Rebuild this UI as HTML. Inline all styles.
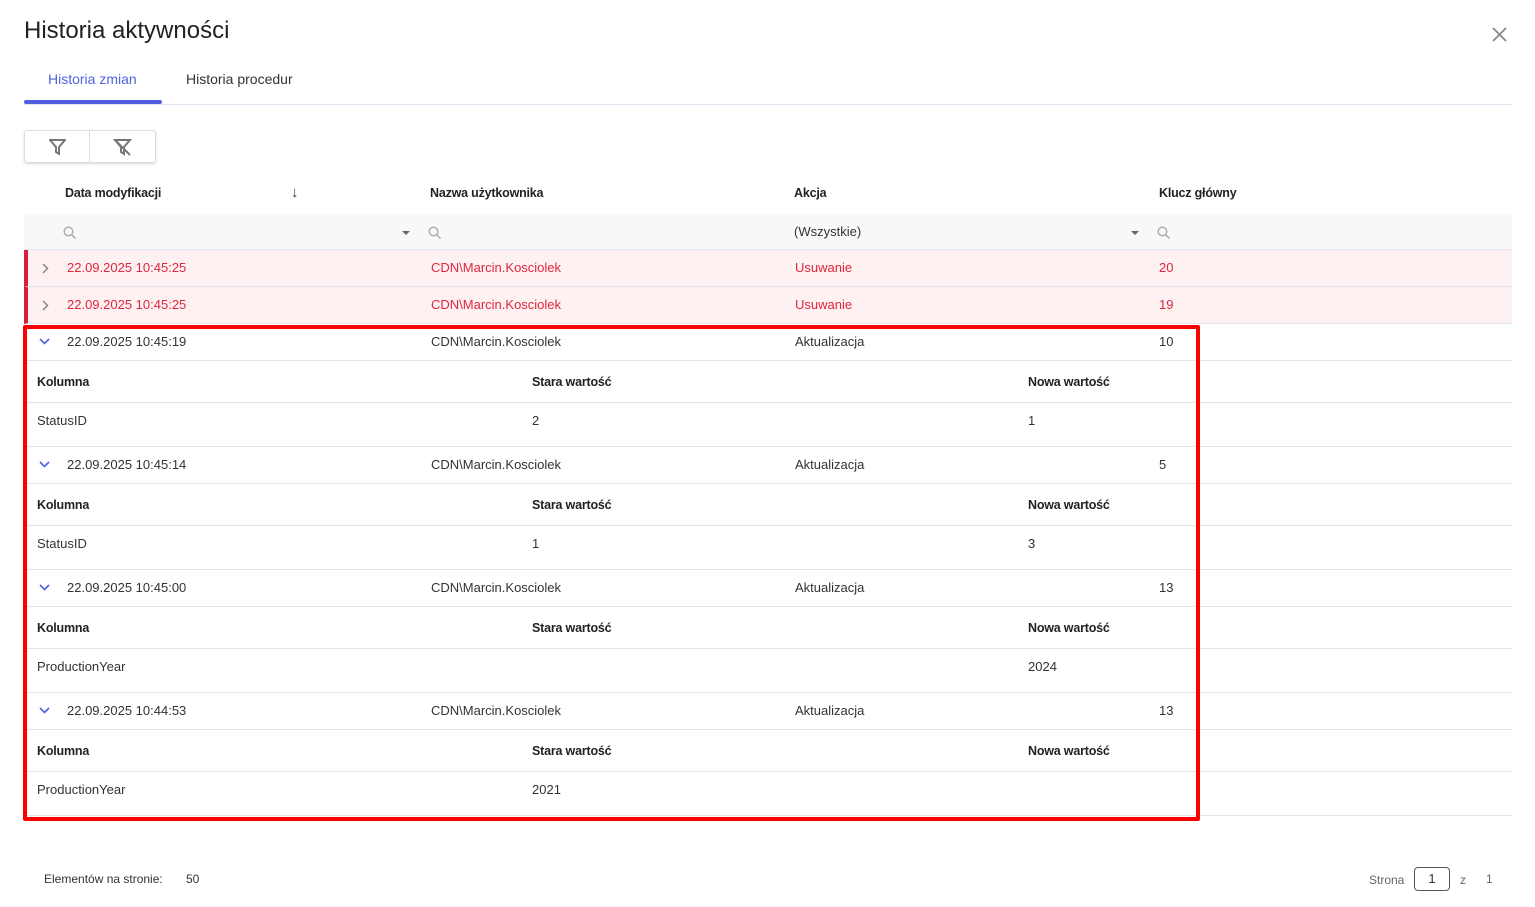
<!DOCTYPE html>
<html><head><meta charset="utf-8"><style>
*{margin:0;padding:0;box-sizing:border-box}
body{width:1535px;height:907px;background:#fff;font-family:"Liberation Sans",sans-serif;color:#333;position:relative;overflow:hidden;font-size:13px}
.a{position:absolute;white-space:nowrap}
.b{font-weight:bold;color:#222;font-size:12.5px;letter-spacing:-0.2px}
.row{position:absolute;left:24px;width:1488px;border-bottom:1px solid #e3e3f0}
.red{color:#e0263d}
</style></head><body>
<div class="a" style="left:24px;top:17px;font-size:24px;color:#222">Historia aktywności</div>
<svg class="a" style="left:1492px;top:27px" width="15" height="15"><path d="M1 1l13 13M14 1L1 14" stroke="#888" stroke-width="1.8"/></svg>
<div class="a" style="left:48px;top:71px;font-size:14px;color:#4f63e0">Historia zmian</div>
<div class="a" style="left:186px;top:71px;font-size:14px;color:#333">Historia procedur</div>
<div class="a" style="left:24px;top:104px;width:1488px;height:1px;background:#e4e6f3"></div>
<div class="a" style="left:24px;top:100px;width:138px;height:4px;background:#4f5fe0;border-radius:2px"></div>
<div class="a" style="left:24px;top:130px;width:132px;height:33px;border:1px solid #ddd;border-radius:3px;box-shadow:0 1px 2px rgba(0,0,0,.15)"></div>
<div class="a" style="left:89px;top:131px;width:1px;height:31px;background:#ddd"></div>
<svg class="a" style="left:49px;top:139px" width="17" height="16" viewBox="0 0 17 16"><path d="M1 1h15l-6 7v7l-3-2V8z" fill="none" stroke="#777" stroke-width="2"/></svg>
<svg class="a" style="left:113px;top:139px" width="19" height="17" viewBox="0 0 19 17"><path d="M2 1h15l-6 7v7l-3-2V8z" fill="none" stroke="#777" stroke-width="2"/><path d="M2 1l15 15" stroke="#777" stroke-width="2"/></svg>
<div class="a b" style="left:65px;top:186px">Data modyfikacji</div>
<div class="a" style="left:291px;top:184px;font-size:15px">↓</div>
<div class="a b" style="left:430px;top:186px">Nazwa użytkownika</div>
<div class="a b" style="left:794px;top:186px">Akcja</div>
<div class="a b" style="left:1159px;top:186px">Klucz główny</div>
<div class="row" style="top:214px;height:36px;background:#f7f8fa"></div>
<svg class="a" style="left:63px;top:226px" width="14" height="14"><circle cx="5.5" cy="5.5" r="4.3" fill="none" stroke="#aaa" stroke-width="1.4"/><path d="M8.5 8.5l4 4" stroke="#aaa" stroke-width="1.5"/></svg>
<svg class="a" style="left:428px;top:226px" width="14" height="14"><circle cx="5.5" cy="5.5" r="4.3" fill="none" stroke="#aaa" stroke-width="1.4"/><path d="M8.5 8.5l4 4" stroke="#aaa" stroke-width="1.5"/></svg>
<svg class="a" style="left:1157px;top:226px" width="14" height="14"><circle cx="5.5" cy="5.5" r="4.3" fill="none" stroke="#aaa" stroke-width="1.4"/><path d="M8.5 8.5l4 4" stroke="#aaa" stroke-width="1.5"/></svg>
<div class="a" style="left:402px;top:231px;border:4px solid transparent;border-top:4px solid #666"></div>
<div class="a" style="left:1131px;top:231px;border:4px solid transparent;border-top:4px solid #666"></div>
<div class="a" style="left:794px;top:224px">(Wszystkie)</div>

<div class="row" style="top:250px;height:37px;background:#fdf1f2;border-left:4px solid #d91e3d"></div>
<div class="row" style="top:287px;height:37px;background:#fdf1f2;border-left:4px solid #d91e3d"></div>
<svg class="a" style="left:42px;top:263px" width="7" height="11"><path d="M1 1l4.5 4.5L1 10" fill="none" stroke="#888" stroke-width="1.5"/></svg>
<svg class="a" style="left:42px;top:300px" width="7" height="11"><path d="M1 1l4.5 4.5L1 10" fill="none" stroke="#888" stroke-width="1.5"/></svg>
<div class="a red" style="left:67px;top:260px">22.09.2025 10:45:25</div>
<div class="a red" style="left:431px;top:260px">CDN\Marcin.Kosciolek</div>
<div class="a red" style="left:795px;top:260px">Usuwanie</div>
<div class="a red" style="left:1159px;top:260px">20</div>
<div class="a red" style="left:67px;top:297px">22.09.2025 10:45:25</div>
<div class="a red" style="left:431px;top:297px">CDN\Marcin.Kosciolek</div>
<div class="a red" style="left:795px;top:297px">Usuwanie</div>
<div class="a red" style="left:1159px;top:297px">19</div>

<div class="row" style="top:324px;height:37px"></div><div class="row" style="top:361px;height:42px"></div><div class="row" style="top:403px;height:44px"></div>
<div class="row" style="top:447px;height:37px"></div><div class="row" style="top:484px;height:42px"></div><div class="row" style="top:526px;height:44px"></div>
<div class="row" style="top:570px;height:37px"></div><div class="row" style="top:607px;height:42px"></div><div class="row" style="top:649px;height:44px"></div>
<div class="row" style="top:693px;height:37px"></div><div class="row" style="top:730px;height:42px"></div><div class="row" style="top:772px;height:44px"></div>

<svg class="a" style="left:39px;top:338px" width="11" height="7"><path d="M1 1l4.5 4.5L10 1" fill="none" stroke="#4f5fe0" stroke-width="1.6"/></svg>
<div class="a" style="left:67px;top:334px">22.09.2025 10:45:19</div><div class="a" style="left:431px;top:334px">CDN\Marcin.Kosciolek</div><div class="a" style="left:795px;top:334px">Aktualizacja</div><div class="a" style="left:1159px;top:334px">10</div>
<div class="a b" style="left:37px;top:375px">Kolumna</div><div class="a b" style="left:532px;top:375px">Stara wartość</div><div class="a b" style="left:1028px;top:375px">Nowa wartość</div>
<div class="a" style="left:37px;top:413px">StatusID</div><div class="a" style="left:532px;top:413px">2</div><div class="a" style="left:1028px;top:413px">1</div>

<svg class="a" style="left:39px;top:461px" width="11" height="7"><path d="M1 1l4.5 4.5L10 1" fill="none" stroke="#4f5fe0" stroke-width="1.6"/></svg>
<div class="a" style="left:67px;top:457px">22.09.2025 10:45:14</div><div class="a" style="left:431px;top:457px">CDN\Marcin.Kosciolek</div><div class="a" style="left:795px;top:457px">Aktualizacja</div><div class="a" style="left:1159px;top:457px">5</div>
<div class="a b" style="left:37px;top:498px">Kolumna</div><div class="a b" style="left:532px;top:498px">Stara wartość</div><div class="a b" style="left:1028px;top:498px">Nowa wartość</div>
<div class="a" style="left:37px;top:536px">StatusID</div><div class="a" style="left:532px;top:536px">1</div><div class="a" style="left:1028px;top:536px">3</div>

<svg class="a" style="left:39px;top:584px" width="11" height="7"><path d="M1 1l4.5 4.5L10 1" fill="none" stroke="#4f5fe0" stroke-width="1.6"/></svg>
<div class="a" style="left:67px;top:580px">22.09.2025 10:45:00</div><div class="a" style="left:431px;top:580px">CDN\Marcin.Kosciolek</div><div class="a" style="left:795px;top:580px">Aktualizacja</div><div class="a" style="left:1159px;top:580px">13</div>
<div class="a b" style="left:37px;top:621px">Kolumna</div><div class="a b" style="left:532px;top:621px">Stara wartość</div><div class="a b" style="left:1028px;top:621px">Nowa wartość</div>
<div class="a" style="left:37px;top:659px">ProductionYear</div><div class="a" style="left:1028px;top:659px">2024</div>

<svg class="a" style="left:39px;top:707px" width="11" height="7"><path d="M1 1l4.5 4.5L10 1" fill="none" stroke="#4f5fe0" stroke-width="1.6"/></svg>
<div class="a" style="left:67px;top:703px">22.09.2025 10:44:53</div><div class="a" style="left:431px;top:703px">CDN\Marcin.Kosciolek</div><div class="a" style="left:795px;top:703px">Aktualizacja</div><div class="a" style="left:1159px;top:703px">13</div>
<div class="a b" style="left:37px;top:744px">Kolumna</div><div class="a b" style="left:532px;top:744px">Stara wartość</div><div class="a b" style="left:1028px;top:744px">Nowa wartość</div>
<div class="a" style="left:37px;top:782px">ProductionYear</div><div class="a" style="left:532px;top:782px">2021</div>

<div class="a" style="left:23px;top:325px;width:1177px;height:496px;border:4px solid #ff0000;border-radius:2px"></div>

<div class="a" style="left:44px;top:872px;font-size:12px">Elementów na stronie:</div>
<div class="a" style="left:186px;top:872px;font-size:12px">50</div>
<div class="a" style="left:1369px;top:873px;font-size:12px;color:#666">Strona</div>
<div class="a" style="left:1414px;top:867px;width:36px;height:24px;border:1px solid #555;border-radius:4px;text-align:center;line-height:22px;font-size:13px">1</div>
<div class="a" style="left:1460px;top:873px;font-size:12px;color:#666">z</div>
<div class="a" style="left:1486px;top:872px;font-size:12px;color:#666">1</div>
</body></html>
